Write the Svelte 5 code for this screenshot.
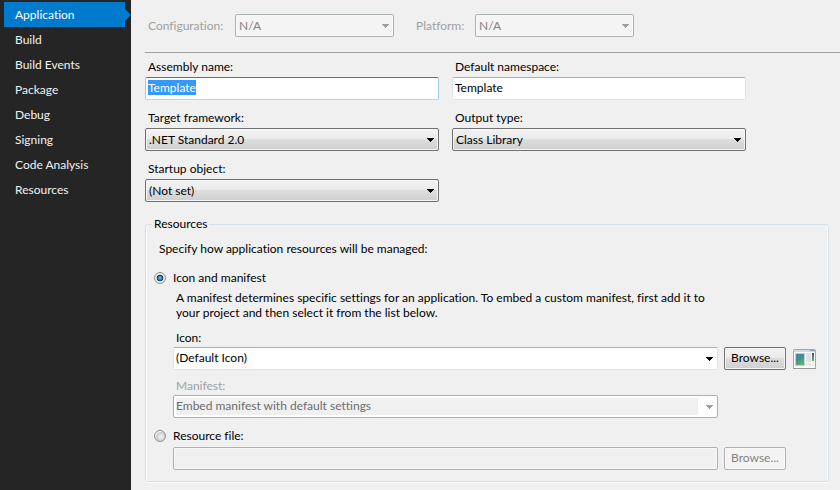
<script>
  import { onMount } from 'svelte';

  const pages = ['Application', 'Build', 'Build Events', 'Package', 'Debug', 'Signing', 'Code Analysis', 'Resources'];
  let current = $state('Application');
  let assemblyName = $state('Template');
  let namespaceName = $state('Template');
  let mode = $state('icon');
  let nameBox;

  onMount(() => {
    nameBox.focus();
    nameBox.select();
  });
</script>

{#snippet dropdown(id, value, kind, disabled)}
  <div class="combo {kind}" class:disabled>
    <select {id} {disabled}>
      <option>{value}</option>
    </select>
    <svg class="arrow" width="7" height="4" viewBox="0 0 7 4" shape-rendering="crispEdges" aria-hidden="true">
      <path d="M0 0h7v1h-1v1h-1v1h-1v1h-1v-1h-1v-1h-1v-1h-1z" />
    </svg>
  </div>
{/snippet}

<div class="designer">
  <nav>
    {#each pages as page}
      <a href="#{page}" class:active={page === current} onclick={() => (current = page)}>{page}</a>
    {/each}
  </nav>

  <main>
    <header>
      <label for="configuration">Configuration:</label>
      {@render dropdown('configuration', 'N/A', 'flat', true)}
      <label for="platform" class="second">Platform:</label>
      {@render dropdown('platform', 'N/A', 'flat', true)}
    </header>

    <div class="fields">
      <div class="field">
        <label for="assembly">Assembly name:</label>
        <input id="assembly" type="text" spellcheck="false" bind:this={nameBox} bind:value={assemblyName} />
      </div>
      <div class="field">
        <label for="namespace">Default namespace:</label>
        <input id="namespace" type="text" spellcheck="false" bind:value={namespaceName} />
      </div>
      <div class="field">
        <label for="framework">Target framework:</label>
        {@render dropdown('framework', '.NET Standard 2.0', 'raised', false)}
      </div>
      <div class="field">
        <label for="output">Output type:</label>
        {@render dropdown('output', 'Class Library', 'raised', false)}
      </div>
      <div class="field">
        <label for="startup">Startup object:</label>
        {@render dropdown('startup', '(Not set)', 'raised', false)}
      </div>
    </div>

    <fieldset>
      <legend>Resources</legend>
      <p class="intro">Specify how application resources will be managed:</p>

      <label class="choice">
        <input type="radio" name="mode" value="icon" bind:group={mode} />
        Icon and manifest
      </label>
      <div class="group">
        <p class="help">A manifest determines specific settings for an application. To embed a custom manifest, first add it to your project and then select it from the list below.</p>
        <label for="icon">Icon:</label>
        <div class="row">
          {@render dropdown('icon', '(Default Icon)', 'white', false)}
          <button type="button">Browse...</button>
          <svg class="preview" width="23" height="20" viewBox="0 0 23 20" aria-hidden="true">
            <defs>
              <linearGradient id="scene" x1="0" y1="0" x2="0.4" y2="1">
                <stop offset="0" stop-color="#4c86b4" />
                <stop offset="0.5" stop-color="#3f928c" />
                <stop offset="1" stop-color="#5eb36b" />
              </linearGradient>
              <linearGradient id="meter" x1="0" y1="0" x2="0" y2="1">
                <stop offset="0" stop-color="#2b50a8" />
                <stop offset="0.55" stop-color="#4387a8" />
                <stop offset="1" stop-color="#6cc04a" />
              </linearGradient>
            </defs>
            <rect x="0.5" y="0.5" width="22" height="19" rx="1" fill="#fcfcfc" stroke="#a3a7ab" />
            <rect x="1" y="1" width="21" height="2" fill="#d3dae1" />
            <rect x="17" y="1" width="5" height="1" fill="#8d9db4" />
            <rect x="2.5" y="4.5" width="9" height="12" fill="url(#scene)" stroke="#c3cbd4" />
            <rect x="13" y="4" width="5" height="9" fill="#e2e2e4" />
            <rect x="13" y="14" width="5" height="3" fill="#e8e8ea" />
            <rect x="19" y="4" width="2" height="8" fill="url(#meter)" />
            <rect x="19" y="13" width="2" height="4" fill="#f0ece8" />
            <rect x="0" y="19" width="23" height="1" fill="#979797" />
          </svg>
        </div>
        <label for="manifest" class="dim">Manifest:</label>
        <div class="row">
          {@render dropdown('manifest', 'Embed manifest with default settings', 'inset', true)}
          <span class="spacer"></span>
        </div>
      </div>

      <label class="choice second-choice">
        <input type="radio" name="mode" value="file" bind:group={mode} />
        Resource file:
      </label>
      <div class="group">
        <div class="row">
          <input type="text" aria-label="Resource file" disabled />
          <button type="button" disabled>Browse...</button>
          <span class="gap"></span>
        </div>
      </div>
    </fieldset>
  </main>
</div>

<style>
  :global(body) {
    background: #f0f0f0;
  }
  .designer {
    display: flex;
    min-height: 100vh;
    font: 12px/16px Lato, "Open Sans", sans-serif;
    font-variant-ligatures: none;
    color: #000;
  }
  .designer * {
    box-sizing: border-box;
  }
  nav {
    flex: 0 0 131px;
    padding: 2px 6px 0 4px;
    background: #252526;
  }
  nav a {
    position: relative;
    display: block;
    padding-left: 11px;
    line-height: 25px;
    color: #f1f1f1;
    text-decoration: none;
  }
  nav a.active {
    background: #007acc;
    color: #fff;
  }
  nav a.active::after {
    content: "";
    position: absolute;
    left: 100%;
    top: 7px;
    border: 6px solid transparent;
    border-left-color: #007acc;
    border-right-width: 0;
  }
  main {
    flex: 1;
    min-width: 0;
    padding: 14px 0 8px 14px;
  }
  header {
    display: flex;
    align-items: center;
    padding: 0 0 15px 3px;
    border-bottom: 1px solid #a0a0a0;
    color: #a0a0a0;
  }
  header label {
    flex: 0 0 87px;
  }
  header label.second {
    flex-basis: 59px;
    margin-left: 22px;
  }
  header .combo {
    flex: 0 1 159px;
  }
  .fields {
    display: grid;
    grid-template-columns: repeat(2, minmax(0, 294px));
    gap: 10px 13px;
    padding-top: 6px;
  }
  .field label {
    display: block;
    padding-left: 3px;
    margin-bottom: 2px;
  }
  input[type="text"],
  select,
  button {
    display: block;
    width: 100%;
    height: 23px;
    margin: 0;
    font: inherit;
    color: inherit;
    border-radius: 2px;
    outline: none;
  }
  input[type="text"] {
    padding: 0 3px 2px 2px;
    background: #fff;
    border: 1px solid #e2e3ea;
    border-top-color: #abadb3;
  }
  input[type="text"]:focus {
    border-color: #a4c9e3 #a4c9e3 #b7d9ed;
    border-top-color: #3d7bad;
  }
  input[type="text"]:disabled {
    background: #f0f0f0;
    border-color: #afafaf;
    box-shadow: inset 0 0 0 1px #fafafa;
  }
  input::selection {
    background: #3399ff;
    color: #fff;
  }
  .combo {
    position: relative;
  }
  select {
    appearance: none;
    padding: 0 20px 0 3px;
    border: 1px solid #707070;
    opacity: 1;
  }
  .arrow {
    position: absolute;
    right: 5px;
    top: 10px;
    pointer-events: none;
  }
  .disabled .arrow {
    fill: #a0a0a0;
  }
  .raised select,
  button {
    background: linear-gradient(#f2f2f2, #ebebeb 49%, #dddddd 50%, #cfcfcf);
    border: 1px solid #707070;
    box-shadow: inset 0 0 0 1px #f6f6f6;
  }
  .flat select,
  button:disabled {
    background: #f4f4f4;
    border-color: #adb2b5;
    color: #838383;
    box-shadow: inset 0 0 0 1px #f9f9f9;
  }
  .white select {
    background: #fff;
    border-color: #abadb3 #e2e3ea #e2e3ea;
    padding: 0 20px 1px 2px;
  }
  .inset select {
    background: #fff linear-gradient(#f0f0f0, #f0f0f0) no-repeat 2px 2px / calc(100% - 21px) calc(100% - 4px);
    border-color: #afafaf;
    color: #6d6d6d;
    padding: 0 20px 1px 2px;
  }
  fieldset {
    min-width: 0;
    margin: 14px 11px 0 0;
    padding: 9px 12px 11px 8px;
    border: 1px solid #d5dfe5;
    border-radius: 3px;
    box-shadow: inset 1px 0 #fff, inset -1px 0 #fff, 0 1px #fff;
  }
  legend {
    padding: 0 2px;
    margin-left: -2px;
  }
  p {
    margin: 0;
  }
  .intro {
    padding-left: 5px;
  }
  .choice {
    display: flex;
    align-items: center;
    gap: 7px;
    margin-top: 13px;
  }
  .second-choice {
    margin: 10px 0 3px;
  }
  input[type="radio"] {
    appearance: none;
    width: 12px;
    height: 12px;
    margin: 0;
    border: 1px solid #8e8f8f;
    border-radius: 50%;
    background: radial-gradient(circle at 60% 60%, #e9e9e9 20%, #c4c8cc 55%, #f4f4f4 62%);
    outline: none;
  }
  input[type="radio"]:checked {
    background: radial-gradient(circle, #7cc4e4 0, #2e86b8 25%, #12384f 42%, #eef2f4 52%);
  }
  .group {
    padding-left: 19px;
  }
  .group > label {
    display: block;
    padding-left: 3px;
    margin-bottom: 1px;
  }
  .help {
    max-width: 550px;
    padding: 4px 0 10px 3px;
    line-height: 15px;
  }
  .dim {
    margin-top: 8px;
    color: #a0a0a0;
  }
  .row {
    display: flex;
    align-items: center;
    gap: 6px;
  }
  .row .combo,
  .row input {
    flex: 1;
    min-width: 0;
  }
  button {
    flex: 0 0 62px;
    padding: 0 0 1px;
    text-align: center;
  }
  .preview {
    flex: none;
    margin-left: 1px;
  }
  .gap {
    flex: 0 0 24px;
  }
  .spacer {
    flex: 0 0 92px;
  }
</style>
